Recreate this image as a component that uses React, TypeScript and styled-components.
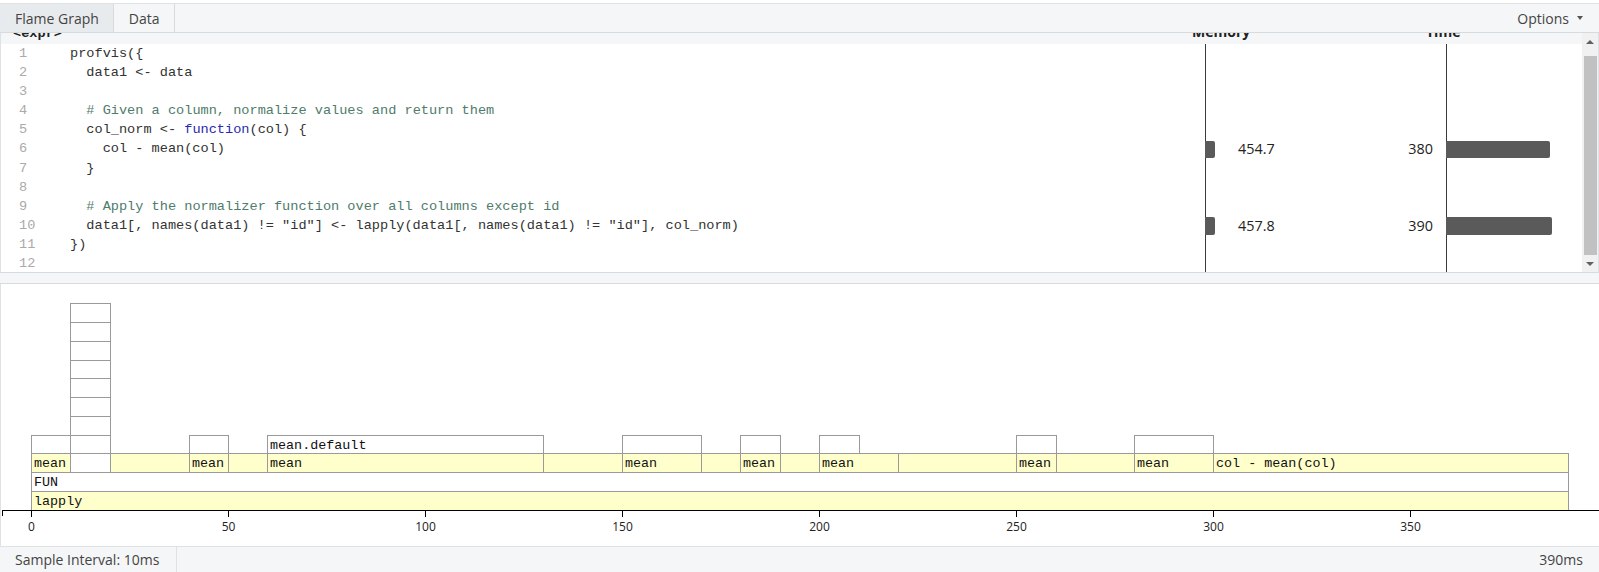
import React from "react";
import styled, { createGlobalStyle } from "styled-components";

const GlobalStyle = createGlobalStyle`
  html, body { margin: 0; padding: 0; background: #fff; }
  body { font-family: "Open Sans", "Liberation Sans", sans-serif; color: #333; }
  * { box-sizing: border-box; }
`;

const MONO = `"Liberation Mono", "DejaVu Sans Mono", monospace`;
const LINE_H = 19.1;

const Root = styled.div`
  width: 1599px;
  height: 572px;
  display: flex;
  flex-direction: column;
  overflow: hidden;
  padding-top: 3px;
`;

const TabBar = styled.div`
  height: 30px;
  flex: none;
  display: flex;
  align-items: stretch;
  background: #f4f6f7;
  border-top: 1px solid #dfe2e4;
  border-bottom: 1px solid #d8dbdd;
`;

const Tab = styled.div<{ $active?: boolean }>`
  display: flex;
  align-items: center;
  padding: 0 14px 0 15px;
  font-size: 14px;
  color: #444;
  background: ${(p) => (p.$active ? "#e8ebed" : "transparent")};
  border-right: 1px solid #d8dbdd;
`;

const Spacer = styled.div`
  flex: 1;
`;

const OptionsButton = styled.div`
  display: flex;
  align-items: center;
  gap: 8px;
  padding-right: 16px;
  font-size: 14px;
  color: #444;
`;

const Caret = styled.span`
  width: 0;
  height: 0;
  border-left: 3px solid transparent;
  border-right: 3px solid transparent;
  border-top: 4px solid #555;
`;

const CodePanel = styled.div`
  height: 240px;
  flex: none;
  display: flex;
  border-left: 1px solid #dfe2e4;
  border-right: 1px solid #dfe2e4;
  border-bottom: 1px solid #d8dbdd;
  overflow: hidden;
`;

const CodeTable = styled.div`
  flex: 1;
  display: flex;
  flex-direction: column;
  overflow: hidden;
`;

const HeaderRow = styled.div`
  height: 11px;
  flex: none;
  display: grid;
  grid-template-columns: 1191px 55px 179px 40px 1fr;
  background: #f5f6f7;
  overflow: hidden;
`;

const HeaderLabel = styled.div<{ $mono?: boolean; $pad?: number }>`
  font-family: ${(p) => (p.$mono ? MONO : `"Open Sans", "Liberation Sans", sans-serif`)};
  font-size: ${(p) => (p.$mono ? "13.6px" : "14px")};
  font-weight: 700;
  color: #222;
  line-height: 20px;
  margin-top: ${(p) => (p.$mono ? "-9px" : "-11px")};
  padding-left: ${(p) => p.$pad ?? 0}px;
  white-space: nowrap;
`;

const Row = styled.div`
  height: ${LINE_H}px;
  flex: none;
  display: grid;
  grid-template-columns: 69px 1135px 29px 147px 65px 1fr;
  align-items: stretch;
`;

const LineNo = styled.div`
  font-family: ${MONO};
  font-size: 13.6px;
  color: #aaa;
  padding-left: 18px;
  line-height: ${LINE_H}px;
`;

const Code = styled.div`
  font-family: ${MONO};
  font-size: 13.6px;
  color: #333;
  white-space: pre;
  line-height: ${LINE_H}px;
`;

const Tok = styled.span<{ $kind: "comment" | "keyword" }>`
  color: ${(p) => (p.$kind === "comment" ? "#4f7c6b" : "#2a2ab0")};
`;

const BarCell = styled.div`
  border-left: 1px solid #3a3a3a;
  padding-top: 1.2px;
`;

const Bar = styled.div`
  height: 17.5px;
  margin-left: -1px;
  background: #5a5a5a;
  border-radius: 0 2px 2px 0;
`;

const Value = styled.div<{ $right?: boolean }>`
  font-size: 14.4px;
  color: #222;
  line-height: ${LINE_H}px;
  text-align: ${(p) => (p.$right ? "right" : "left")};
  padding: ${(p) => (p.$right ? "0 13px 0 0" : "0 0 0 4px")};
`;

const ScrollBar = styled.div`
  width: 16px;
  flex: none;
  background: #f1f1f1;
  display: flex;
  flex-direction: column;
`;

const ScrollArrow = styled.div<{ $down?: boolean }>`
  height: 17px;
  flex: none;
  display: flex;
  align-items: center;
  justify-content: center;
  &::after {
    content: "";
    width: 0;
    height: 0;
    border-left: 4px solid transparent;
    border-right: 4px solid transparent;
    ${(p) => (p.$down ? "border-top: 4px solid #606060;" : "border-bottom: 4px solid #606060;")}
  }
`;

const ScrollThumb = styled.div`
  flex: 1;
  margin: 6px 1px 0 2px;
  background: #c1c1c1;
`;

const Splitter = styled.div`
  height: 11px;
  flex: none;
  background: #f4f6f7;
  border-bottom: 1px solid #d8dbdd;
`;

const FlamePanel = styled.div`
  height: 262px;
  flex: none;
  border-left: 1px solid #dfe2e4;
  overflow: hidden;
  background: #fff;
`;

const Footer = styled.div`
  flex: 1;
  display: flex;
  align-items: stretch;
  background: #f4f6f7;
  border-top: 1px solid #dfe2e4;
`;

const FooterItem = styled.div<{ $right?: boolean }>`
  display: flex;
  align-items: center;
  padding: 0 ${(p) => (p.$right ? "16px" : "17px")} 0 ${(p) => (p.$right ? "0" : "15px")};
  font-size: 14px;
  color: #444;
  border-right: ${(p) => (p.$right ? "none" : "1px solid #dfe2e4")};
  margin-left: ${(p) => (p.$right ? "auto" : "0")};
`;

type Seg = { t: string; k?: "comment" | "keyword" };
type Line = { segs: Seg[]; mem?: number; time?: number };

const lines: Line[] = [
  { segs: [{ t: "profvis({" }] },
  { segs: [{ t: "  data1 <- data" }] },
  { segs: [{ t: "" }] },
  { segs: [{ t: "  " }, { t: "# Given a column, normalize values and return them", k: "comment" }] },
  { segs: [{ t: "  col_norm <- " }, { t: "function", k: "keyword" }, { t: "(col) {" }] },
  { segs: [{ t: "    col - mean(col)" }], mem: 454.7, time: 380 },
  { segs: [{ t: "  }" }] },
  { segs: [{ t: "" }] },
  { segs: [{ t: "  " }, { t: "# Apply the normalizer function over all columns except id", k: "comment" }] },
  {
    segs: [{ t: '  data1[, names(data1) != "id"] <- lapply(data1[, names(data1) != "id"], col_norm)' }],
    mem: 457.8,
    time: 390,
  },
  { segs: [{ t: "})" }] },
  { segs: [{ t: "" }] },
];

type Cell = { t0: number; t1: number; level: number; label?: string; y?: boolean };

const cells: Cell[] = [
  { t0: 0, t1: 390, level: 0, label: "lapply", y: true },
  { t0: 0, t1: 390, level: 1, label: "FUN" },
  { t0: 0, t1: 10, level: 2, label: "mean", y: true },
  { t0: 10, t1: 20, level: 2 },
  { t0: 20, t1: 40, level: 2, y: true },
  { t0: 40, t1: 50, level: 2, label: "mean", y: true },
  { t0: 50, t1: 60, level: 2, y: true },
  { t0: 60, t1: 130, level: 2, label: "mean", y: true },
  { t0: 130, t1: 150, level: 2, y: true },
  { t0: 150, t1: 170, level: 2, label: "mean", y: true },
  { t0: 170, t1: 180, level: 2, y: true },
  { t0: 180, t1: 190, level: 2, label: "mean", y: true },
  { t0: 190, t1: 200, level: 2, y: true },
  { t0: 200, t1: 220, level: 2, label: "mean", y: true },
  { t0: 220, t1: 250, level: 2, y: true },
  { t0: 250, t1: 260, level: 2, label: "mean", y: true },
  { t0: 260, t1: 280, level: 2, y: true },
  { t0: 280, t1: 300, level: 2, label: "mean", y: true },
  { t0: 300, t1: 390, level: 2, label: "col - mean(col)", y: true },
  { t0: 0, t1: 10, level: 3 },
  { t0: 10, t1: 20, level: 3 },
  { t0: 40, t1: 50, level: 3 },
  { t0: 60, t1: 130, level: 3, label: "mean.default" },
  { t0: 150, t1: 170, level: 3 },
  { t0: 180, t1: 190, level: 3 },
  { t0: 200, t1: 210, level: 3 },
  { t0: 250, t1: 260, level: 3 },
  { t0: 280, t1: 300, level: 3 },
  ...[4, 5, 6, 7, 8, 9, 10].map((level) => ({ t0: 10, t1: 20, level })),
];

const SCALE = 3.941;
const X0 = 30;
const AXIS_Y = 225.5;
const ROW_H = 18.75;
const sx = (t: number) => Math.round(X0 + t * SCALE);

function FlameGraph() {
  const ticks = [0, 50, 100, 150, 200, 250, 300, 350];
  return (
    <svg width={1598} height={262} style={{ display: "block" }}>
      {cells.map((c, i) => {
        const x0 = sx(c.t0);
        const x1 = sx(c.t1);
        const yTop = Math.round(AXIS_Y - (c.level + 1) * ROW_H);
        const yBot = Math.round(AXIS_Y - c.level * ROW_H);
        return (
          <g key={i}>
            <rect
              x={x0 + 0.5}
              y={yTop + 0.5}
              width={x1 - x0}
              height={yBot - yTop}
              fill={c.y ? "#ffffcc" : "#ffffff"}
              stroke="#9a9a9a"
              strokeWidth={1}
              shapeRendering="crispEdges"
            />
            {c.label ? (
              <text
                x={x0 + 3}
                y={yTop + 14}
                fontFamily="Liberation Mono, DejaVu Sans Mono, monospace"
                fontSize={13.4}
                fill="#111"
              >
                {c.label}
              </text>
            ) : null}
          </g>
        );
      })}
      <path
        d={`M1.5,${AXIS_Y + 6.5} V${AXIS_Y + 0.5} H1598`}
        fill="none"
        stroke="#000"
        strokeWidth={1}
        shapeRendering="crispEdges"
      />
      {ticks.map((t) => (
        <g key={t}>
          <line
            x1={sx(t) + 0.5}
            x2={sx(t) + 0.5}
            y1={AXIS_Y}
            y2={AXIS_Y + 7}
            stroke="#000"
            strokeWidth={1}
            shapeRendering="crispEdges"
          />
          <text
            x={sx(t) + 0.5}
            y={AXIS_Y + 21}
            textAnchor="middle"
            fontFamily="Open Sans, Liberation Sans, sans-serif"
            fontSize={12}
            fill="#222"
          >
            {t}
          </text>
        </g>
      ))}
    </svg>
  );
}

export default function App() {
  return (
    <>
      <GlobalStyle />
      <Root>
        <TabBar>
          <Tab $active>Flame Graph</Tab>
          <Tab>Data</Tab>
          <Spacer />
          <OptionsButton>
            Options <Caret />
          </OptionsButton>
        </TabBar>
        <CodePanel>
          <CodeTable>
            <HeaderRow>
              <HeaderLabel $mono $pad={12}>&lt;expr&gt;</HeaderLabel>
              <HeaderLabel>Memory</HeaderLabel>
              <div />
              <HeaderLabel>Time</HeaderLabel>
              <div />
            </HeaderRow>
            {lines.map((ln, i) => (
              <Row key={i}>
                <LineNo>{i + 1}</LineNo>
                <Code>
                  {ln.segs.map((s, j) =>
                    s.k ? (
                      <Tok key={j} $kind={s.k}>
                        {s.t}
                      </Tok>
                    ) : (
                      <React.Fragment key={j}>{s.t}</React.Fragment>
                    )
                  )}
                </Code>
                <BarCell>{ln.mem !== undefined ? <Bar style={{ width: 10 }} /> : null}</BarCell>
                <Value>{ln.mem !== undefined ? ln.mem.toFixed(1) : ""}</Value>
                <Value $right>{ln.time !== undefined ? ln.time : ""}</Value>
                <BarCell>
                  {ln.time !== undefined ? (
                    <Bar style={{ width: `${((ln.time / 390) * 106.3).toFixed(1)}px` }} />
                  ) : null}
                </BarCell>
              </Row>
            ))}
          </CodeTable>
          <ScrollBar>
            <ScrollArrow />
            <ScrollThumb />
            <ScrollArrow $down />
          </ScrollBar>
        </CodePanel>
        <Splitter />
        <FlamePanel>
          <FlameGraph />
        </FlamePanel>
        <Footer>
          <FooterItem>Sample Interval: 10ms</FooterItem>
          <FooterItem $right>390ms</FooterItem>
        </Footer>
      </Root>
    </>
  );
}
